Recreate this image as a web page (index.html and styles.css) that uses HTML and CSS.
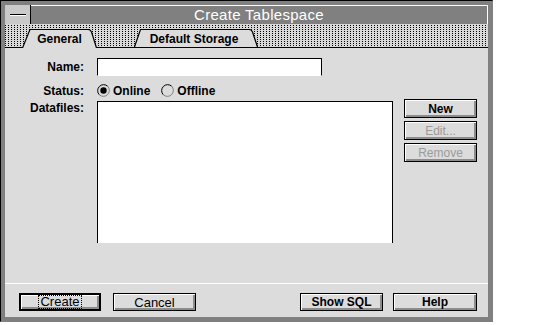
FILE: index.html
```html
<!DOCTYPE html>
<html lang="en">
<head>
  <meta charset="UTF-8">
  <title>Create Tablespace</title>
  <link rel="stylesheet" href="styles.css">
</head>
<body>
  <div class="window">
    <div class="titlebar">
      <div class="sysmenu"><span class="dash"></span></div>
      <div class="title">Create Tablespace</div>
    </div>

    <div class="tabstrip">
      <div class="tab tab-general active">
        <svg width="75" height="19" viewBox="0 0 75 19">
          <path d="M0.5 19 L8 0.5 H66 Q68.5 0.5 69.5 3 L74.5 19" fill="#dcdcdc" stroke="#000" stroke-width="1.2"/>
        </svg>
        <span>General</span>
      </div>
      <div class="tab tab-storage">
        <svg width="124" height="18" viewBox="0 0 124 18">
          <path d="M0.5 18 L6.5 0.5 H115 Q117.5 0.5 118.5 3 L123.5 18" fill="#dcdcdc" stroke="#000" stroke-width="1.2"/>
        </svg>
        <span>Default Storage</span>
      </div>
    </div>

    <div class="page">
      <div class="row row-name">
        <span class="label">Name:</span>
        <div class="field"></div>
      </div>

      <div class="row row-status">
        <span class="label">Status:</span>
        <div class="radios">
          <span class="radio">
            <svg width="13" height="13" viewBox="0 0 13 13">
              <path d="M2.26 10.74 A6 6 0 0 1 10.74 2.26" fill="none" stroke="#000"/>
              <path d="M10.74 2.26 A6 6 0 0 1 2.26 10.74" fill="none" stroke="#808080"/>
              <circle cx="6.5" cy="6.5" r="3.2" fill="#000"/>
            </svg>
            Online
          </span>
          <span class="radio">
            <svg width="13" height="13" viewBox="0 0 13 13">
              <path d="M2.26 10.74 A6 6 0 0 1 10.74 2.26" fill="none" stroke="#000"/>
              <path d="M10.74 2.26 A6 6 0 0 1 2.26 10.74" fill="none" stroke="#808080"/>
            </svg>
            Offline
          </span>
        </div>
      </div>

      <div class="row row-files">
        <span class="label">Datafiles:</span>
        <div class="listbox"></div>
        <div class="side-buttons">
          <div class="btn">New</div>
          <div class="btn disabled">Edit...</div>
          <div class="btn disabled">Remove</div>
        </div>
      </div>
    </div>

    <div class="footer">
      <div class="btn btn-wide plain default"><span class="focus">Create</span></div>
      <div class="btn btn-wide plain btn-cancel">Cancel</div>
      <div class="btn btn-wide btn-sql">Show SQL</div>
      <div class="btn btn-wide btn-help">Help</div>
    </div>
  </div>
</body>
</html>
```

FILE: styles.css
```css
* {
  box-sizing: border-box;
}

body {
  margin: 0;
  background: #fff;
  font-family: "Liberation Sans", Arial, sans-serif;
  font-size: 12px;
  font-weight: bold;
  color: #000;
}

.window {
  width: 493px;
  height: 322px;
  border: 1px solid;
  border-color: #000 #808080 #808080 #000;
  background: #808080;
  padding: 4px;
  display: flex;
  flex-direction: column;
}

/* title bar */
.titlebar {
  height: 19px;
  display: flex;
  background: #808080;
  border-top: 1px solid #fff;
  border-right: 1px solid #fff;
}

.sysmenu {
  width: 26px;
  background: #cacaca;
  border-right: 1px solid #000;
  display: flex;
  align-items: center;
  justify-content: center;
  margin-top: -1px;
}

.dash {
  width: 16px;
  height: 2px;
  border-top: 1px solid #000;
  border-bottom: 1px solid #fff;
}

.title {
  flex: 1;
  text-align: center;
  color: #fff;
  font-weight: normal;
  font-size: 15px;
  line-height: 18px;
  letter-spacing: 0.3px;
}

/* tabs */
.tabstrip {
  height: 24px;
  display: flex;
  align-items: flex-end;
  padding-left: 17px;
  border-bottom: 1px solid #000;
  background-color: #d8d8d8;
  background-image:
    linear-gradient(#d8d8d8 50%, transparent 50%),
    linear-gradient(90deg, #000 1px, transparent 1px);
  background-size: 3px 2px, 3px 2px;
}

.tab {
  position: relative;
  display: flex;
  align-items: center;
  justify-content: center;
  height: 18px;
}

.tab svg {
  position: absolute;
  left: 0;
  top: 0;
}

.tab span {
  position: relative;
  padding-top: 1px;
}

.tab-general {
  width: 75px;
  height: 19px;
  margin-bottom: -1px;
}

.tab-storage {
  width: 124px;
  margin-left: 37px;
  padding-right: 4px;
}

/* page body */
.page {
  flex: 1;
  background: #dcdcdc;
  padding-top: 10px;
}

.row {
  display: flex;
}

.label {
  width: 79px;
  text-align: right;
  margin-right: 13px;
}

.row-name {
  height: 18px;
  align-items: center;
}

.field {
  width: 225px;
  height: 18px;
  background: #fff;
  border: 1px solid #000;
  border-bottom-color: #fff;
}

.row-status {
  margin-top: 8px;
  height: 13px;
  align-items: center;
}

.radios {
  display: flex;
  align-items: center;
  gap: 11px;
}

.radio {
  display: flex;
  align-items: center;
  gap: 3px;
}

.row-files {
  margin-top: 4px;
}

.listbox {
  width: 296px;
  height: 142px;
  background: #fff;
  border: 1px solid #000;
  border-bottom: none;
}

.side-buttons {
  margin-left: 11px;
  margin-top: -2px;
  display: flex;
  flex-direction: column;
  gap: 3px;
}

/* buttons */
.btn {
  width: 73px;
  height: 19px;
  display: flex;
  align-items: center;
  justify-content: center;
  background: #dcdcdc;
  border: 1px solid #000;
  box-shadow: inset 1px 1px 0 #fff, inset -2px -2px 0 #8c8c8c;
}

.btn.disabled {
  color: #9a9a9a;
  font-weight: normal;
}

.footer {
  height: 34px;
  background: #dcdcdc;
  border-top: 1px solid #fff;
  display: flex;
  align-items: flex-start;
  padding: 9px 11px 0 14px;
}

.btn-wide {
  width: 83px;
  height: 18px;
}

.plain {
  font-weight: normal;
  font-size: 13px;
}

.default {
  width: 82px;
  border: 2px solid #000;
}

.focus {
  border: 1px dotted #000;
  padding: 0 1px;
  line-height: 12px;
}

.btn-cancel {
  margin-left: 12px;
}

.btn-sql {
  margin-left: auto;
}

.btn-help {
  width: 84px;
  margin-left: 10px;
}
```
